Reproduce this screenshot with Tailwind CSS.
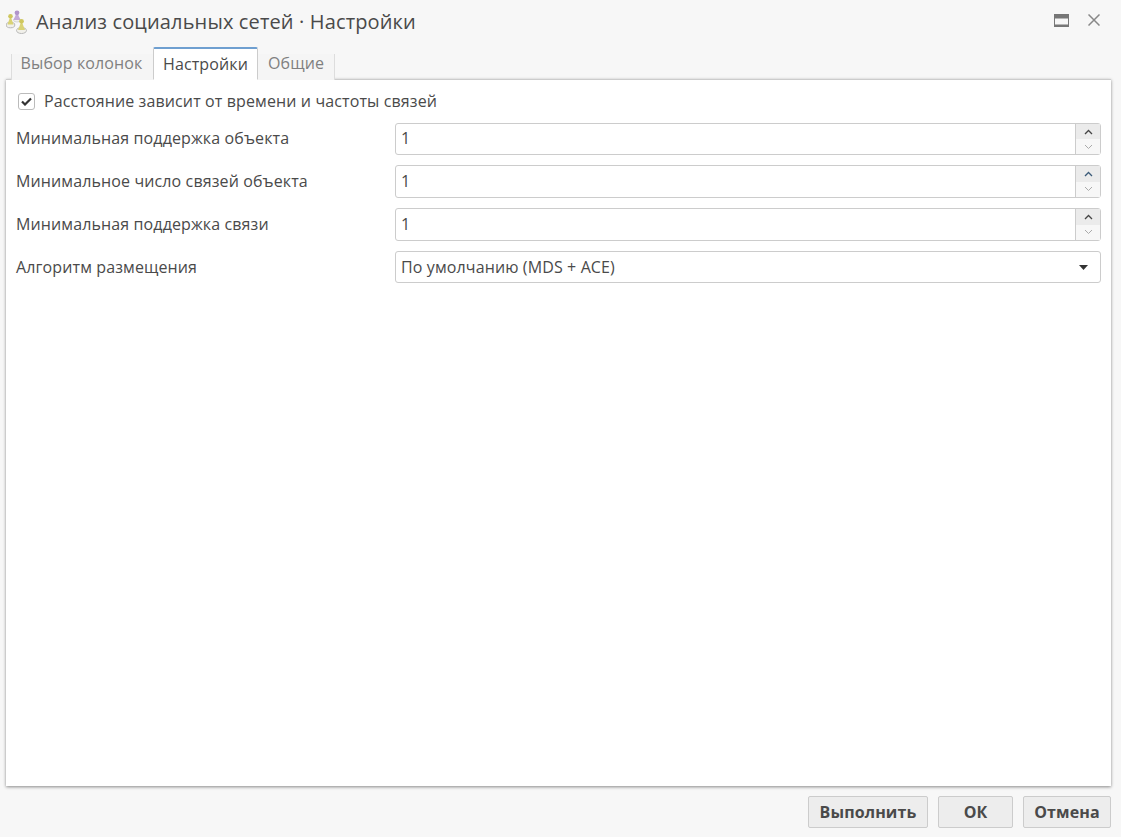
<!DOCTYPE html>
<html lang="ru">
<head>
    <meta charset="UTF-8" />
    <title>Анализ социальных сетей · Настройки</title>
    <script src="https://cdn.jsdelivr.net/npm/@tailwindcss/browser@4"></script>
</head>
<body class="w-[1121px] h-[837px] overflow-hidden bg-[#f7f7f7] flex flex-col font-['Open_Sans',sans-serif] text-[#4a4a4a] tracking-[0.12px]">

<!-- Title bar -->
<div class="h-[47px] flex items-center pl-[6px] pr-[21px] pb-[3px] shrink-0">
    <svg class="w-[22px] h-[24px] mr-[8px]" viewBox="0 0 22 24">
        <ellipse cx="4.500" cy="15" rx="4.300" ry="2.800" fill="#f1f0ea" stroke="#b8b8b8" stroke-width="1"/>
        <ellipse cx="15.500" cy="20.500" rx="5" ry="3" fill="#f1f0ea" stroke="#b8b8b8" stroke-width="1"/>
        <ellipse cx="11" cy="10" rx="3.500" ry="2" fill="#f1f0ea" stroke="#c8c8c8" stroke-width="0.700"/>
        <path d="M11 2 L14.500 10 L7.500 10 Z" fill="#c3aad8"/>
        <circle cx="11" cy="2.800" r="2.400" fill="#b094ca"/>
        <path d="M4.500 6 L7.500 14.500 L1.500 14.500 Z" fill="#dad374"/>
        <circle cx="4.500" cy="6.300" r="2.300" fill="#cfc75e"/>
        <path d="M15.500 11 L19 20 L12 20 Z" fill="#dad374"/>
        <circle cx="15.500" cy="11.300" r="2.400" fill="#cfc75e"/>
    </svg>
    <span class="text-[20px] tracking-[0.14px]">Анализ социальных сетей · Настройки</span>
    <div class="ml-auto flex items-center gap-[19px] mb-[4px]">
        <svg class="w-[15px] h-[13px]" viewBox="0 0 15 13">
            <rect x="0.500" y="0.500" width="14" height="12" fill="none" stroke="#777" stroke-width="1"/>
            <rect x="0.500" y="0.500" width="14" height="4" fill="#777"/>
            <rect x="0.500" y="10.500" width="14" height="2" fill="#777"/>
        </svg>
        <svg class="w-[12px] h-[12px]" viewBox="0 0 12 12">
            <path d="M0.500 0.500 L11.500 11.500 M11.500 0.500 L0.500 11.500" stroke="#888" stroke-width="1.500" fill="none"/>
        </svg>
    </div>
</div>

<!-- Tabs -->
<div class="flex items-end h-[33px] pl-[11px] shrink-0 relative z-10 -mb-px text-[16px]">
    <div class="w-[142px] h-[26px] pb-[8px] pr-[2px] flex items-center justify-center text-[#808080] bg-[#f5f5f5] border-l border-[#ddd]">Выбор колонок</div>
    <div class="w-[105px] h-[33px] pb-[1px] flex items-center justify-center bg-white border border-[#ccc] border-b-white border-t-2 border-t-[#6f9fd0] rounded-t-[2px]">Настройки</div>
    <div class="w-[77px] h-[26px] pb-[8px] flex items-center justify-center text-[#808080] bg-[#f5f5f5] border-r border-[#ddd]">Общие</div>
</div>

<!-- Panel -->
<div class="mx-[6px] w-[1105px] h-[707px] shrink-0 bg-white border-t border-[#ccc] shadow-[0_1px_3px_rgba(0,0,0,0.45)] px-[10px] pt-[12px] text-[16px]">
    <label class="flex items-center h-[18px] pl-[2px] gap-[9px]">
        <span class="w-[17px] h-[17px] border border-[#bbb] rounded-[3px] flex items-center justify-center bg-white">
            <svg class="w-[11px] h-[9px]" viewBox="0 0 11 9"><path d="M1 4.500 L4 7.500 L10 1.500" fill="none" stroke="#333" stroke-width="2.200"/></svg>
        </span>
        Расстояние зависит от времени и частоты связей
    </label>

    <div class="grid grid-cols-[379px_706px] items-center mt-[13px] gap-y-[10px]">
        <div class="pb-[2px]">Минимальная поддержка объекта</div>
        <div class="h-[32px] flex border border-[#ccc] rounded-[3px] bg-white">
            <div class="flex-1 flex items-center pl-[5px] pb-[2px]">1</div>
            <div class="w-[25px] flex flex-col border-l border-[#ccc]">
                <div class="flex-1 bg-[#ebebeb] flex items-center justify-center"><svg class="w-[9px] h-[6px]" viewBox="0 0 9 6"><path d="M1 5 L4.500 1.500 L8 5" fill="none" stroke="#444" stroke-width="1.300"/></svg></div>
                <div class="flex-1 bg-[#f7f7f7] flex items-center justify-center"><svg class="w-[9px] h-[6px]" viewBox="0 0 9 6"><path d="M1 1 L4.500 4.500 L8 1" fill="none" stroke="#aaa" stroke-width="1"/></svg></div>
            </div>
        </div>

        <div class="pb-[2px]">Минимальное число связей объекта</div>
        <div class="h-[33px] flex border border-[#ccc] rounded-[3px] bg-white">
            <div class="flex-1 flex items-center pl-[5px] pb-[2px]">1</div>
            <div class="w-[25px] flex flex-col border-l border-[#ccc]">
                <div class="flex-1 bg-[#ebebeb] flex items-center justify-center"><svg class="w-[9px] h-[6px]" viewBox="0 0 9 6"><path d="M1 5 L4.500 1.500 L8 5" fill="none" stroke="#3a5a78" stroke-width="1.300"/></svg></div>
                <div class="flex-1 bg-[#f7f7f7] flex items-center justify-center"><svg class="w-[9px] h-[6px]" viewBox="0 0 9 6"><path d="M1 1 L4.500 4.500 L8 1" fill="none" stroke="#aaa" stroke-width="1"/></svg></div>
            </div>
        </div>

        <div class="pb-[2px]">Минимальная поддержка связи</div>
        <div class="h-[33px] flex border border-[#ccc] rounded-[3px] bg-white">
            <div class="flex-1 flex items-center pl-[5px] pb-[2px]">1</div>
            <div class="w-[25px] flex flex-col border-l border-[#ccc]">
                <div class="flex-1 bg-[#ebebeb] flex items-center justify-center"><svg class="w-[9px] h-[6px]" viewBox="0 0 9 6"><path d="M1 5 L4.500 1.500 L8 5" fill="none" stroke="#444" stroke-width="1.300"/></svg></div>
                <div class="flex-1 bg-[#f7f7f7] flex items-center justify-center"><svg class="w-[9px] h-[6px]" viewBox="0 0 9 6"><path d="M1 1 L4.500 4.500 L8 1" fill="none" stroke="#aaa" stroke-width="1"/></svg></div>
            </div>
        </div>

        <div>Алгоритм размещения</div>
        <div class="h-[32px] flex items-center justify-between border border-[#ccc] rounded-[3px] bg-white pl-[5px] pr-[12px]">
            <span>По умолчанию (MDS + ACE)</span>
            <svg class="w-[9px] h-[5px]" viewBox="0 0 9 5"><path d="M0 0 H9 L4.500 5 Z" fill="#333"/></svg>
        </div>
    </div>
</div>

<!-- Footer buttons -->
<div class="flex justify-end gap-[10px] pr-[10px] pt-[10px] text-[16px] font-bold">
    <button class="w-[120px] h-[32px] bg-[#ededed] border border-[#ccc] rounded-[2px]">Выполнить</button>
    <button class="w-[75px] h-[32px] bg-[#ededed] border border-[#ccc] rounded-[2px]">ОК</button>
    <button class="w-[88px] h-[32px] bg-[#ededed] border border-[#ccc] rounded-[2px]">Отмена</button>
</div>
</body>
</html>
